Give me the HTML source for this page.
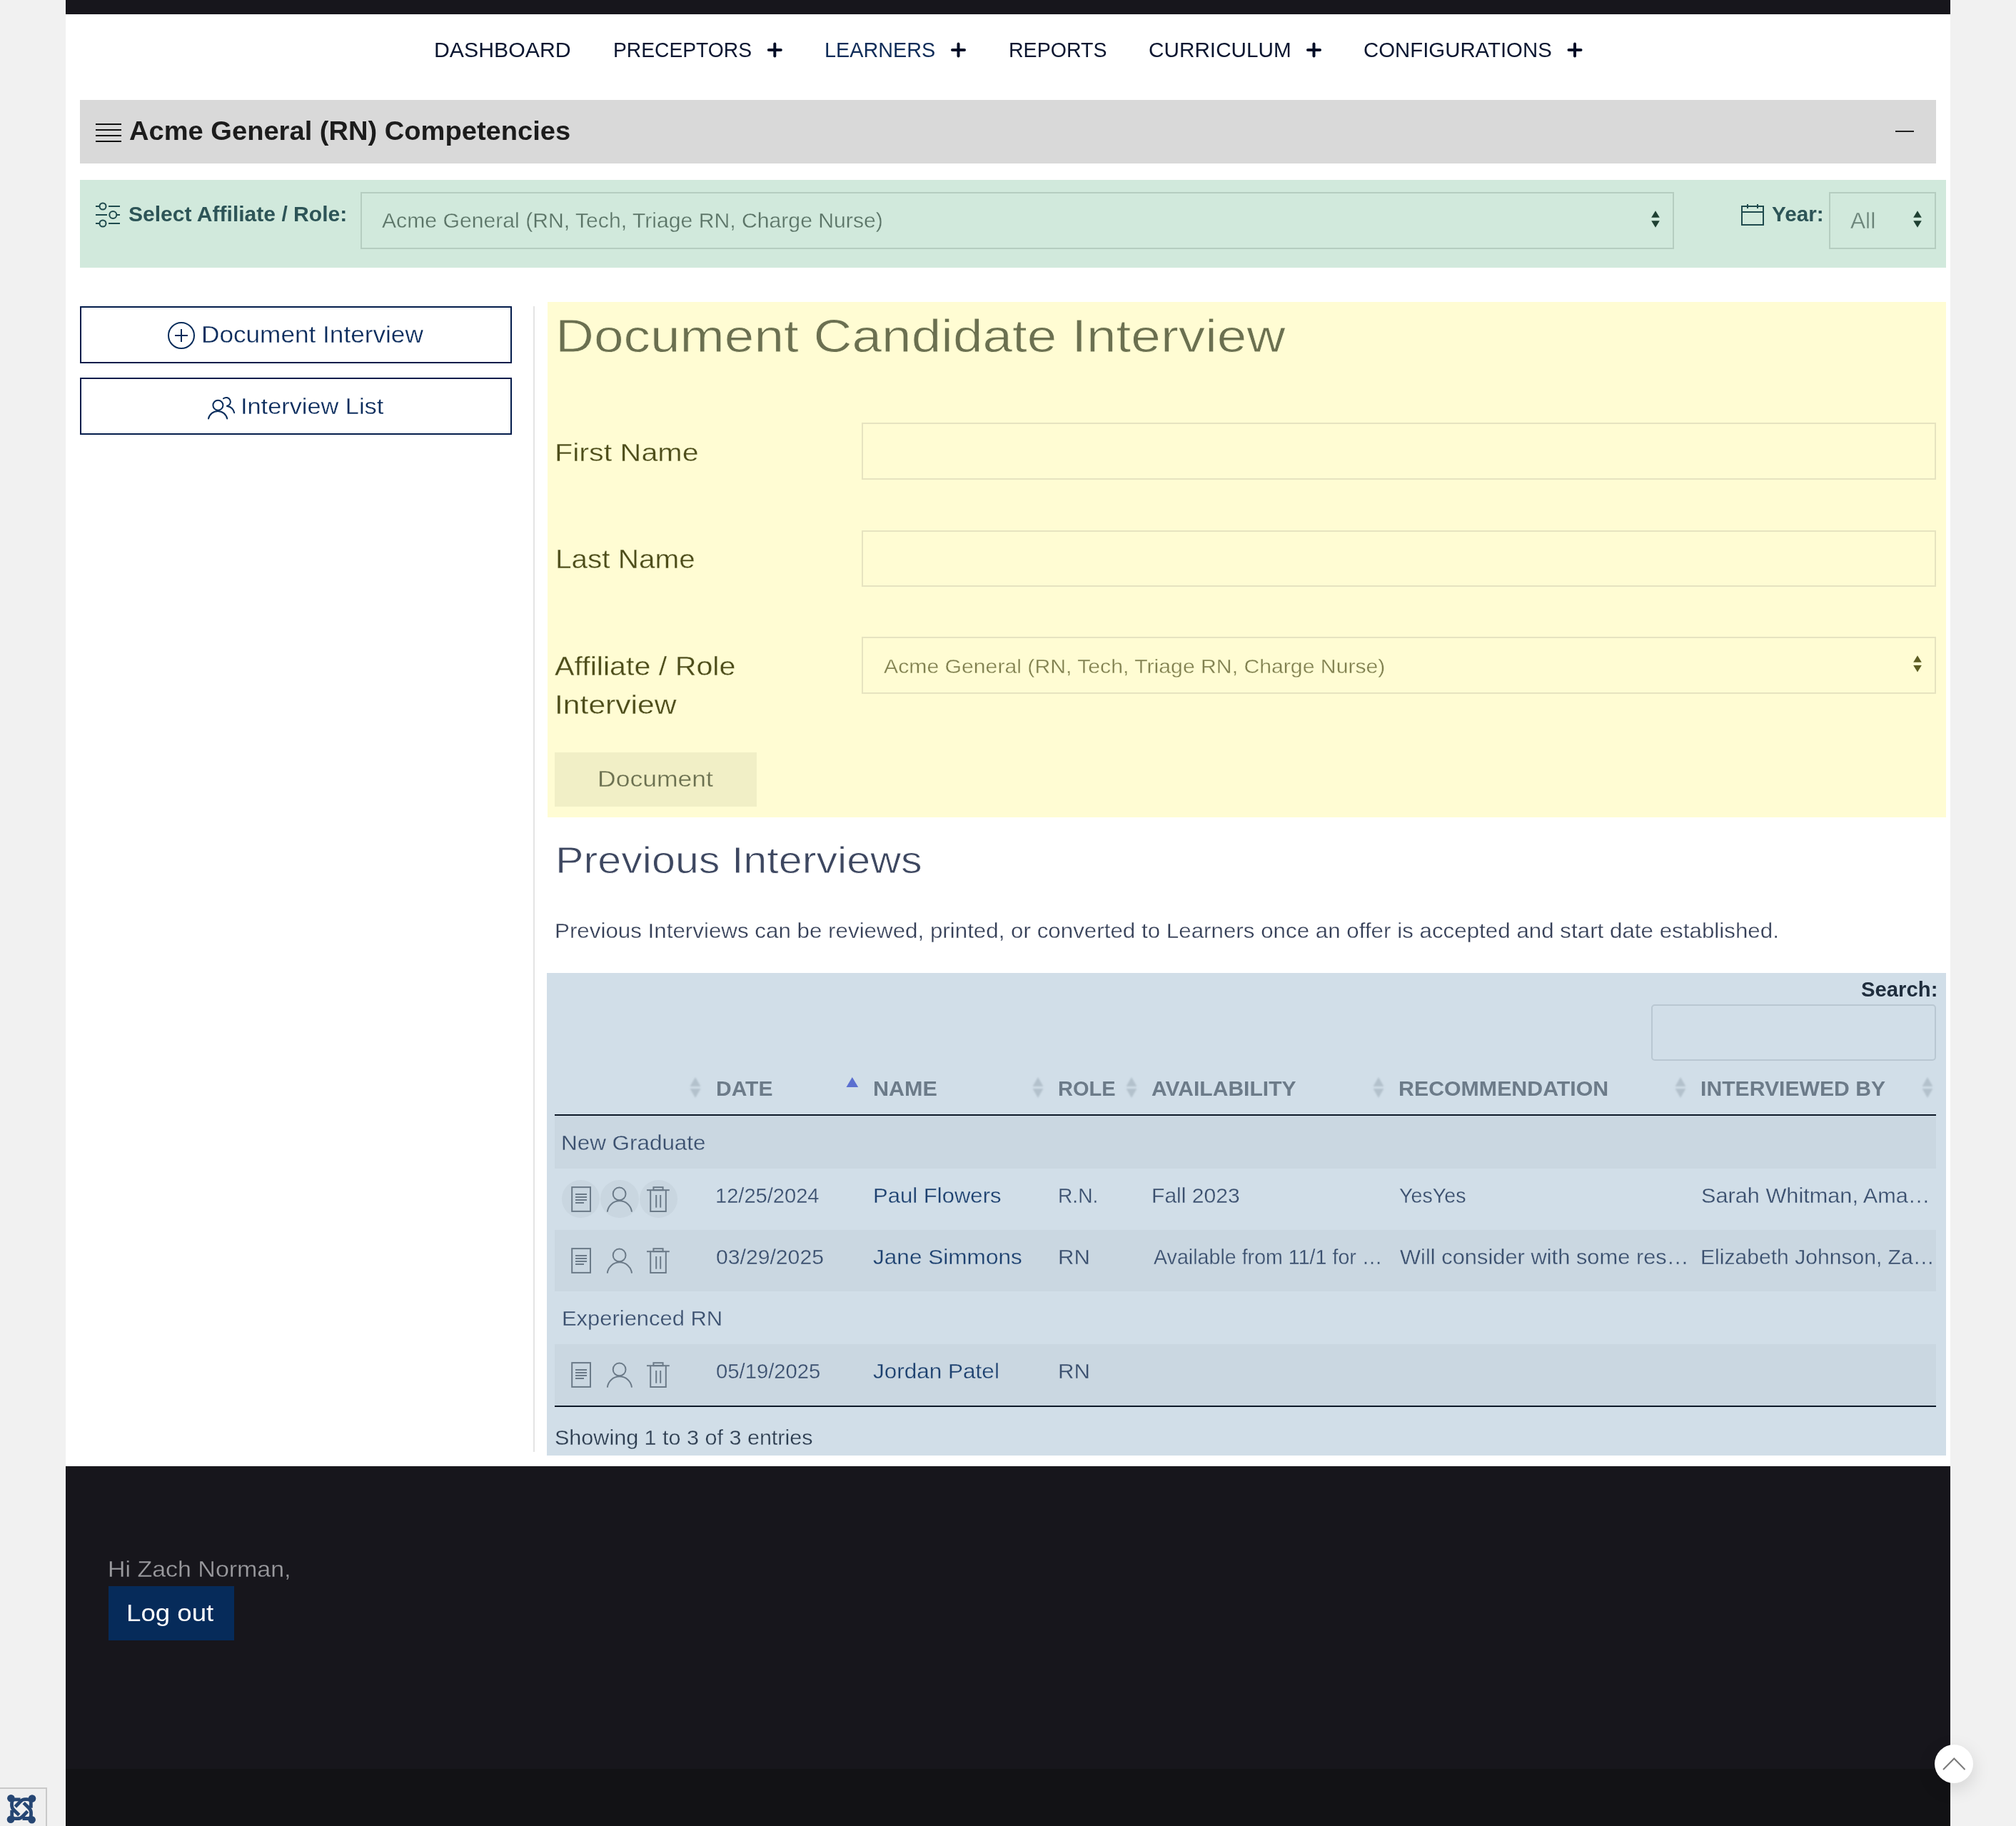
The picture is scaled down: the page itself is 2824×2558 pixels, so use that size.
<!DOCTYPE html>
<html><head><meta charset="utf-8"><title>Document Candidate Interview</title>
<style>
html,body{margin:0;padding:0;}
html{overflow:hidden;background:#f1f1f1;}
body{width:2824px;height:2558px;background:#f1f1f1;position:relative;overflow:hidden;font-family:"Liberation Sans",sans-serif;}
body>div{position:absolute;}
.t{position:absolute;white-space:nowrap;transform-origin:0 0;}
svg.icons{position:absolute;left:0;top:0;}
</style></head><body>
<div style="left:92px;top:0px;width:2640px;height:2054px;background:#ffffff"></div>
<div style="left:92px;top:0px;width:2640px;height:20px;background:#17161c"></div>
<div style="left:112px;top:140px;width:2600px;height:89px;background:#d9d9d9"></div>
<div style="left:112px;top:252px;width:2614px;height:123px;background:#d1e9dc"></div>
<div style="left:505px;top:269px;width:1840px;height:80px;border:2px solid #b5cdc0;box-sizing:border-box"></div>
<div style="left:2562px;top:269px;width:150px;height:80px;border:2px solid #b5cdc0;box-sizing:border-box"></div>
<div style="left:112px;top:429px;width:605px;height:80px;border:2px solid #031c4b;box-sizing:border-box"></div>
<div style="left:112px;top:529px;width:605px;height:80px;border:2px solid #031c4b;box-sizing:border-box"></div>
<div style="left:747px;top:429px;width:2px;height:1605px;background:#e4e4e4"></div>
<div style="left:767px;top:423px;width:1959px;height:722px;background:#fffcd3"></div>
<div style="left:1207px;top:592px;width:1505px;height:80px;border:2px solid #e6e3c0;box-sizing:border-box"></div>
<div style="left:1207px;top:743px;width:1505px;height:79px;border:2px solid #e6e3c0;box-sizing:border-box"></div>
<div style="left:1207px;top:892px;width:1505px;height:80px;border:2px solid #e6e3c0;box-sizing:border-box"></div>
<div style="left:777px;top:1054px;width:283px;height:76px;background:#f1efc6"></div>
<div style="left:766px;top:1363px;width:1960px;height:676px;background:#d1dee8"></div>
<div style="left:2313px;top:1407px;width:399px;height:79px;border:2px solid #b9c7d2;border-radius:5px;box-sizing:border-box"></div>
<div style="left:777px;top:1563px;width:1935px;height:74px;background:#cad7e1"></div>
<div style="left:777px;top:1723px;width:1935px;height:86px;background:#cad7e1"></div>
<div style="left:777px;top:1883px;width:1935px;height:86px;background:#cad7e1"></div>
<div style="left:777px;top:1561px;width:1935px;height:2px;background:#0c1827"></div>
<div style="left:777px;top:1969px;width:1935px;height:2px;background:#0c1827"></div>
<div style="left:92px;top:2054px;width:2640px;height:504px;background:#17161c"></div>
<div style="left:92px;top:2478px;width:2640px;height:80px;background:#121215"></div>
<div style="left:152px;top:2222px;width:176px;height:76px;background:#062b5a"></div>
<div style="left:0px;top:2504px;width:66px;height:54px;background:#efefef;border-top:2px solid #c9c9c9;border-right:2px solid #c9c9c9;box-sizing:border-box"></div>
<div style="left:787.0px;top:1653.0px;width:53.4px;height:53.4px;border-radius:50%;background:#c9d6e0"></div>
<div style="left:841.3px;top:1653.0px;width:53.4px;height:53.4px;border-radius:50%;background:#c9d6e0"></div>
<div style="left:895.6px;top:1653.0px;width:53.4px;height:53.4px;border-radius:50%;background:#c9d6e0"></div>
<div style="left:2710px;top:2444px;width:54px;height:54px;border-radius:50%;background:#fff;box-shadow:0 8px 26px rgba(0,0,0,0.13)"></div>
<svg class="icons" width="2824" height="2558" viewBox="0 0 2824 2558">
<line x1="1076.8" y1="70" x2="1093.8" y2="70" stroke="#000d26" stroke-width="4" stroke-linecap="round"/>
<line x1="1085.3" y1="61.5" x2="1085.3" y2="78.5" stroke="#000d26" stroke-width="4" stroke-linecap="round"/>
<line x1="1334.0" y1="70" x2="1351.0" y2="70" stroke="#000d26" stroke-width="4" stroke-linecap="round"/>
<line x1="1342.5" y1="61.5" x2="1342.5" y2="78.5" stroke="#000d26" stroke-width="4" stroke-linecap="round"/>
<line x1="1832.0" y1="70" x2="1849.0" y2="70" stroke="#000d26" stroke-width="4" stroke-linecap="round"/>
<line x1="1840.5" y1="61.5" x2="1840.5" y2="78.5" stroke="#000d26" stroke-width="4" stroke-linecap="round"/>
<line x1="2197.5" y1="70" x2="2214.5" y2="70" stroke="#000d26" stroke-width="4" stroke-linecap="round"/>
<line x1="2206" y1="61.5" x2="2206" y2="78.5" stroke="#000d26" stroke-width="4" stroke-linecap="round"/>
<line x1="134" y1="174" x2="170" y2="174" stroke="#111111" stroke-width="2" stroke-linecap="butt"/>
<line x1="134" y1="182" x2="170" y2="182" stroke="#111111" stroke-width="2" stroke-linecap="butt"/>
<line x1="134" y1="190" x2="170" y2="190" stroke="#111111" stroke-width="2" stroke-linecap="butt"/>
<line x1="134" y1="198" x2="170" y2="198" stroke="#111111" stroke-width="2" stroke-linecap="butt"/>
<line x1="2655" y1="184" x2="2681" y2="184" stroke="#222222" stroke-width="2" stroke-linecap="butt"/>
<g fill="none" stroke="#1f4a4d" stroke-width="2"><line x1="134" y1="289" x2="139.5" y2="289"/><circle cx="144" cy="289" r="4.5"/><line x1="152" y1="289" x2="168" y2="289"/><line x1="134" y1="301" x2="150" y2="301"/><circle cx="158.3" cy="301" r="5"/><line x1="163.3" y1="301" x2="168" y2="301"/><line x1="134" y1="313" x2="139.5" y2="313"/><circle cx="144" cy="313" r="4.5"/><line x1="152" y1="313" x2="168" y2="313"/></g>
<g fill="none" stroke="#1f4a4d" stroke-width="2"><rect x="2440" y="289" width="30" height="26"/><line x1="2440" y1="297" x2="2470" y2="297"/><line x1="2448" y1="286" x2="2448" y2="292"/><line x1="2462" y1="286" x2="2462" y2="292"/></g>
<g fill="#1e4032" opacity="1"><polygon points="2319,295.2 2324.8,304.8 2313.2,304.8"/><polygon points="2313.2,309.2 2324.8,309.2 2319,318.79999999999995"/></g>
<g fill="#1e4032" opacity="1"><polygon points="2686,295.2 2691.8,304.8 2680.2,304.8"/><polygon points="2680.2,309.2 2691.8,309.2 2686,318.79999999999995"/></g>
<g fill="#5c5c22" opacity="1"><polygon points="2686,918.2 2691.8,927.7 2680.2,927.7"/><polygon points="2680.2,932.1 2691.8,932.1 2686,941.6"/></g>
<g fill="none" stroke="#062b5a" stroke-width="2"><circle cx="254" cy="470" r="18"/><line x1="245" y1="470" x2="263" y2="470"/><line x1="254" y1="461" x2="254" y2="479"/></g>
<g fill="none" stroke="#062b5a" stroke-width="2" stroke-linecap="round"><circle cx="305.4" cy="567.7" r="7"/><path d="M292,586.5 A13.4,13.4 0 0 1 318.2,586.5"/><path d="M313,558.3 A6,6 0 1 1 318,568.8"/><path d="M318.2,569 A12,12 0 0 1 328.2,578.2"/></g>
<defs><filter id="bl" x="-50%" y="-50%" width="200%" height="200%"><feGaussianBlur stdDeviation="1.1"/></filter></defs><g filter="url(#bl)">
<g fill="#b3c1cc" opacity="1"><polygon points="974,1509 981.5,1522 966.5,1522"/><polygon points="966.5,1525 981.5,1525 974,1538"/></g>
<g fill="#b3c1cc" opacity="1"><polygon points="1454,1509 1461.5,1522 1446.5,1522"/><polygon points="1446.5,1525 1461.5,1525 1454,1538"/></g>
<g fill="#b3c1cc" opacity="1"><polygon points="1585,1509 1592.5,1522 1577.5,1522"/><polygon points="1577.5,1525 1592.5,1525 1585,1538"/></g>
<g fill="#b3c1cc" opacity="1"><polygon points="1931,1509 1938.5,1522 1923.5,1522"/><polygon points="1923.5,1525 1938.5,1525 1931,1538"/></g>
<g fill="#b3c1cc" opacity="1"><polygon points="2354,1509 2361.5,1522 2346.5,1522"/><polygon points="2346.5,1525 2361.5,1525 2354,1538"/></g>
<g fill="#b3c1cc" opacity="1"><polygon points="2700,1509 2707.5,1522 2692.5,1522"/><polygon points="2692.5,1525 2707.5,1525 2700,1538"/></g>
</g>
<polygon points="1193.8,1509 1202.2,1523 1185.5,1523" fill="#5b6fd0"/>
<g fill="none" stroke="#6b7a88" stroke-width="2" transform="translate(0,0)"><rect x="801.2" y="1663.1" width="25.8" height="33.8"/><line x1="806" y1="1673" x2="822" y2="1673"/><line x1="806" y1="1677" x2="822" y2="1677"/><line x1="806" y1="1681" x2="822" y2="1681"/><line x1="806" y1="1685" x2="818" y2="1685"/><circle cx="867.6" cy="1672.4" r="8.9"/><path d="M850.8,1697.6 A17.2,17.2 0 0 1 885,1697.6"/><line x1="906" y1="1667.2" x2="937.8" y2="1667.2"/><rect x="915.4" y="1663.2" width="13.2" height="4"/><path d="M911.2,1667.2 V1696.9 H932.8 V1667.2"/><line x1="919.2" y1="1674" x2="919.2" y2="1691.7"/><line x1="925.2" y1="1674" x2="925.2" y2="1691.7"/></g>
<g fill="none" stroke="#6b7a88" stroke-width="2" transform="translate(0,86)"><rect x="801.2" y="1663.1" width="25.8" height="33.8"/><line x1="806" y1="1673" x2="822" y2="1673"/><line x1="806" y1="1677" x2="822" y2="1677"/><line x1="806" y1="1681" x2="822" y2="1681"/><line x1="806" y1="1685" x2="818" y2="1685"/><circle cx="867.6" cy="1672.4" r="8.9"/><path d="M850.8,1697.6 A17.2,17.2 0 0 1 885,1697.6"/><line x1="906" y1="1667.2" x2="937.8" y2="1667.2"/><rect x="915.4" y="1663.2" width="13.2" height="4"/><path d="M911.2,1667.2 V1696.9 H932.8 V1667.2"/><line x1="919.2" y1="1674" x2="919.2" y2="1691.7"/><line x1="925.2" y1="1674" x2="925.2" y2="1691.7"/></g>
<g fill="none" stroke="#6b7a88" stroke-width="2" transform="translate(0,246)"><rect x="801.2" y="1663.1" width="25.8" height="33.8"/><line x1="806" y1="1673" x2="822" y2="1673"/><line x1="806" y1="1677" x2="822" y2="1677"/><line x1="806" y1="1681" x2="822" y2="1681"/><line x1="806" y1="1685" x2="818" y2="1685"/><circle cx="867.6" cy="1672.4" r="8.9"/><path d="M850.8,1697.6 A17.2,17.2 0 0 1 885,1697.6"/><line x1="906" y1="1667.2" x2="937.8" y2="1667.2"/><rect x="915.4" y="1663.2" width="13.2" height="4"/><path d="M911.2,1667.2 V1696.9 H932.8 V1667.2"/><line x1="919.2" y1="1674" x2="919.2" y2="1691.7"/><line x1="925.2" y1="1674" x2="925.2" y2="1691.7"/></g>
<polyline points="2722,2479 2737.3,2463.5 2752.5,2479" fill="none" stroke="#7a7a7a" stroke-width="2"/>
<g transform="translate(30,2534.2)"><g transform="rotate(0)"><g><circle cx="-14.6" cy="-15" r="5.3" fill="#264673"/><path d="M-1.5,-13.3 L-9,-13.3 C-12,-13.3 -13.5,-11 -13.5,-8 L-13.5,-5 C-13.5,-2 -12.5,-0.5 -10.5,1.5 L-3.2,8.6" fill="none" stroke="#264673" stroke-width="4.8"/></g></g><g transform="rotate(90)"><g><circle cx="-14.6" cy="-15" r="5.3" fill="#264673"/><path d="M-1.5,-13.3 L-9,-13.3 C-12,-13.3 -13.5,-11 -13.5,-8 L-13.5,-5 C-13.5,-2 -12.5,-0.5 -10.5,1.5 L-3.2,8.6" fill="none" stroke="#264673" stroke-width="4.8"/></g></g><g transform="rotate(180)"><g><circle cx="-14.6" cy="-15" r="5.3" fill="#264673"/><path d="M-1.5,-13.3 L-9,-13.3 C-12,-13.3 -13.5,-11 -13.5,-8 L-13.5,-5 C-13.5,-2 -12.5,-0.5 -10.5,1.5 L-3.2,8.6" fill="none" stroke="#264673" stroke-width="4.8"/></g></g><g transform="rotate(270)"><g><circle cx="-14.6" cy="-15" r="5.3" fill="#264673"/><path d="M-1.5,-13.3 L-9,-13.3 C-12,-13.3 -13.5,-11 -13.5,-8 L-13.5,-5 C-13.5,-2 -12.5,-0.5 -10.5,1.5 L-3.2,8.6" fill="none" stroke="#264673" stroke-width="4.8"/></g></g></g>
</svg>
<div class="t" style="left:607.91px;top:56.26px;font-size:28.986px;line-height:28.986px;font-weight:400;color:#0b1630;transform:scaleX(1.0444)">DASHBOARD</div>
<div class="t" style="left:859.05px;top:56.26px;font-size:28.986px;line-height:28.986px;font-weight:400;color:#0b1630;transform:scaleX(0.9745)">PRECEPTORS</div>
<div class="t" style="left:1155.01px;top:56.26px;font-size:28.986px;line-height:28.986px;font-weight:400;color:#0f2c58;transform:scaleX(0.9935)">LEARNERS</div>
<div class="t" style="left:1412.53px;top:56.26px;font-size:28.986px;line-height:28.986px;font-weight:400;color:#0b1630;transform:scaleX(0.9853)">REPORTS</div>
<div class="t" style="left:1609.47px;top:56.26px;font-size:28.986px;line-height:28.986px;font-weight:400;color:#0b1630;transform:scaleX(1.0262)">CURRICULUM</div>
<div class="t" style="left:1910.49px;top:56.26px;font-size:28.986px;line-height:28.986px;font-weight:400;color:#0b1630;transform:scaleX(1.0136)">CONFIGURATIONS</div>
<div class="t" style="left:180.95px;top:166.13px;font-size:36.232px;line-height:36.232px;font-weight:700;color:#1c1c1c;transform:scaleX(1.0518)">Acme General (RN) Competencies</div>
<div class="t" style="left:179.96px;top:286.26px;font-size:28.986px;line-height:28.986px;font-weight:700;color:#2d5457;transform:scaleX(1.0377)">Select Affiliate / Role:</div>
<div class="t" style="left:535.30px;top:295.26px;font-size:28.986px;line-height:28.986px;font-weight:400;color:#5a7366;transform:scaleX(1.0412);-webkit-text-stroke:0.3px #d1e9dc">Acme General (RN, Tech, Triage RN, Charge Nurse)</div>
<div class="t" style="left:2481.67px;top:286.26px;font-size:28.986px;line-height:28.986px;font-weight:700;color:#2d5457;transform:scaleX(1.0254)">Year:</div>
<div class="t" style="left:2592.00px;top:294.44px;font-size:30.435px;line-height:30.435px;font-weight:400;color:#6a8378;transform:scaleX(1.0406);-webkit-text-stroke:0.3px #d1e9dc">All</div>
<div class="t" style="left:281.53px;top:453.24px;font-size:32.319px;line-height:32.319px;font-weight:400;color:#0a2b5c;transform:scaleX(1.0890);-webkit-text-stroke:0.3px #ffffff">Document Interview</div>
<div class="t" style="left:336.80px;top:553.26px;font-size:32.174px;line-height:32.174px;font-weight:400;color:#0a2b5c;transform:scaleX(1.0670);-webkit-text-stroke:0.3px #ffffff">Interview List</div>
<div class="t" style="left:777.77px;top:437.69px;font-size:65.217px;line-height:65.217px;font-weight:400;color:#6b7050;transform:scaleX(1.1467);-webkit-text-stroke:0.8px #fffcd3">Document Candidate Interview</div>
<div class="t" style="left:777.26px;top:616.08px;font-size:35.942px;line-height:35.942px;font-weight:400;color:#4d4d1a;transform:scaleX(1.1474);-webkit-text-stroke:0.3px #fffcd3">First Name</div>
<div class="t" style="left:777.55px;top:766.03px;font-size:36.232px;line-height:36.232px;font-weight:400;color:#4d4d1a;transform:scaleX(1.1175);-webkit-text-stroke:0.3px #fffcd3">Last Name</div>
<div class="t" style="left:776.80px;top:915.78px;font-size:36.522px;line-height:36.522px;font-weight:400;color:#4d4d1a;transform:scaleX(1.1283);-webkit-text-stroke:0.3px #fffcd3">Affiliate / Role</div>
<div class="t" style="left:777.16px;top:970.05px;font-size:36.087px;line-height:36.087px;font-weight:400;color:#4d4d1a;transform:scaleX(1.1816);-webkit-text-stroke:0.3px #fffcd3">Interview</div>
<div class="t" style="left:1237.60px;top:918.63px;font-size:28.551px;line-height:28.551px;font-weight:400;color:#80804f;transform:scaleX(1.0575);-webkit-text-stroke:0.3px #fffcd3">Acme General (RN, Tech, Triage RN, Charge Nurse)</div>
<div class="t" style="left:836.60px;top:1076.87px;font-size:30.870px;line-height:30.870px;font-weight:400;color:#6b7050;transform:scaleX(1.1504);-webkit-text-stroke:0.3px #f1efc6">Document</div>
<div class="t" style="left:777.90px;top:1179.27px;font-size:52.609px;line-height:52.609px;font-weight:400;color:#3d4760;transform:scaleX(1.1262);-webkit-text-stroke:0.8px #ffffff">Previous Interviews</div>
<div class="t" style="left:776.53px;top:1290.49px;font-size:28.841px;line-height:28.841px;font-weight:400;color:#353f57;transform:scaleX(1.0868);-webkit-text-stroke:0.3px #ffffff">Previous Interviews can be reviewed, printed, or converted to Learners once an offer is accepted and start date established.</div>
<div class="t" style="left:2606.60px;top:1371.82px;font-size:29.275px;line-height:29.275px;font-weight:700;color:#1f2d3d;transform:scaleX(1.0010)">Search:</div>
<div class="t" style="left:1002.99px;top:1509.83px;font-size:29.855px;line-height:29.855px;font-weight:700;color:#6c7b89;transform:scaleX(1.0053)">DATE</div>
<div class="t" style="left:1222.95px;top:1509.83px;font-size:29.855px;line-height:29.855px;font-weight:700;color:#6c7b89;transform:scaleX(1.0235)">NAME</div>
<div class="t" style="left:1481.65px;top:1509.83px;font-size:29.855px;line-height:29.855px;font-weight:700;color:#6c7b89;transform:scaleX(0.9725)">ROLE</div>
<div class="t" style="left:1613.29px;top:1509.83px;font-size:29.855px;line-height:29.855px;font-weight:700;color:#6c7b89;transform:scaleX(1.0070)">AVAILABILITY</div>
<div class="t" style="left:1959.37px;top:1509.83px;font-size:29.855px;line-height:29.855px;font-weight:700;color:#6c7b89;transform:scaleX(1.0161)">RECOMMENDATION</div>
<div class="t" style="left:2381.98px;top:1509.83px;font-size:29.855px;line-height:29.855px;font-weight:700;color:#6c7b89;transform:scaleX(1.0102)">INTERVIEWED BY</div>
<div class="t" style="left:786.40px;top:1585.83px;font-size:29.855px;line-height:29.855px;font-weight:400;color:#3a4f6e;transform:scaleX(1.0524);-webkit-text-stroke:0.3px #cad7e1">New Graduate</div>
<div class="t" style="left:1002.33px;top:1660.17px;font-size:29.565px;line-height:29.565px;font-weight:400;color:#3a4f6e;transform:scaleX(0.9841);-webkit-text-stroke:0.3px #d1dee8">12/25/2024</div>
<div class="t" style="left:1222.50px;top:1660.17px;font-size:29.565px;line-height:29.565px;font-weight:400;color:#1c406f;transform:scaleX(1.0512);-webkit-text-stroke:0.3px #d1dee8">Paul Flowers</div>
<div class="t" style="left:1482.09px;top:1660.17px;font-size:29.565px;line-height:29.565px;font-weight:400;color:#3a4f6e;transform:scaleX(0.9545);-webkit-text-stroke:0.3px #d1dee8">R.N.</div>
<div class="t" style="left:1613.46px;top:1660.17px;font-size:29.565px;line-height:29.565px;font-weight:400;color:#3a4f6e;transform:scaleX(1.0186);-webkit-text-stroke:0.3px #d1dee8">Fall 2023</div>
<div class="t" style="left:1959.63px;top:1660.17px;font-size:29.565px;line-height:29.565px;font-weight:400;color:#3a4f6e;transform:scaleX(0.9695);-webkit-text-stroke:0.3px #d1dee8">YesYes</div>
<div class="t" style="left:2383.36px;top:1660.17px;font-size:29.565px;line-height:29.565px;font-weight:400;color:#3a4f6e;transform:scaleX(1.0382);-webkit-text-stroke:0.3px #d1dee8">Sarah Whitman, Ama…</div>
<div class="t" style="left:1003.27px;top:1745.90px;font-size:29.420px;line-height:29.420px;font-weight:400;color:#3a4f6e;transform:scaleX(1.0255);-webkit-text-stroke:0.3px #cad7e1">03/29/2025</div>
<div class="t" style="left:1222.73px;top:1745.90px;font-size:29.420px;line-height:29.420px;font-weight:400;color:#1c406f;transform:scaleX(1.0736);-webkit-text-stroke:0.3px #cad7e1">Jane Simmons</div>
<div class="t" style="left:1481.88px;top:1745.90px;font-size:29.420px;line-height:29.420px;font-weight:400;color:#3a4f6e;transform:scaleX(1.0579);-webkit-text-stroke:0.3px #cad7e1">RN</div>
<div class="t" style="left:1615.50px;top:1745.90px;font-size:29.420px;line-height:29.420px;font-weight:400;color:#3a4f6e;transform:scaleX(0.9738);-webkit-text-stroke:0.3px #cad7e1">Available from 11/1 for …</div>
<div class="t" style="left:1960.60px;top:1745.90px;font-size:29.420px;line-height:29.420px;font-weight:400;color:#3a4f6e;transform:scaleX(1.0492);-webkit-text-stroke:0.3px #cad7e1">Will consider with some res…</div>
<div class="t" style="left:2382.35px;top:1745.90px;font-size:29.420px;line-height:29.420px;font-weight:400;color:#3a4f6e;transform:scaleX(1.0232);-webkit-text-stroke:0.3px #cad7e1">Elizabeth Johnson, Za…</div>
<div class="t" style="left:787.22px;top:1832.15px;font-size:29.710px;line-height:29.710px;font-weight:400;color:#3a4f6e;transform:scaleX(1.0410);-webkit-text-stroke:0.3px #d1dee8">Experienced RN</div>
<div class="t" style="left:1003.28px;top:1906.71px;font-size:28.696px;line-height:28.696px;font-weight:400;color:#3a4f6e;transform:scaleX(1.0191);-webkit-text-stroke:0.3px #cad7e1">05/19/2025</div>
<div class="t" style="left:1222.60px;top:1906.71px;font-size:28.696px;line-height:28.696px;font-weight:400;color:#1c406f;transform:scaleX(1.0981);-webkit-text-stroke:0.3px #cad7e1">Jordan Patel</div>
<div class="t" style="left:1481.83px;top:1906.71px;font-size:28.696px;line-height:28.696px;font-weight:400;color:#3a4f6e;transform:scaleX(1.0865);-webkit-text-stroke:0.3px #cad7e1">RN</div>
<div class="t" style="left:777.18px;top:1998.61px;font-size:30.000px;line-height:30.000px;font-weight:400;color:#2c3c4f;transform:scaleX(1.0178);-webkit-text-stroke:0.3px #d1dee8">Showing 1 to 3 of 3 entries</div>
<div class="t" style="left:150.79px;top:2182.63px;font-size:31.739px;line-height:31.739px;font-weight:400;color:#9a9a9e;transform:scaleX(1.0701);-webkit-text-stroke:0.3px #17161c">Hi Zach Norman,</div>
<div class="t" style="left:177.23px;top:2244.00px;font-size:32.609px;line-height:32.609px;font-weight:400;color:#ffffff;transform:scaleX(1.1245)">Log out</div>
<script>(function(){var s=window.innerWidth/2824;if(s>0&&Math.abs(s-1)>0.005){var b=document.body;b.style.transformOrigin='0 0';b.style.transform='scale('+s+')';}})();</script>
</body></html>
